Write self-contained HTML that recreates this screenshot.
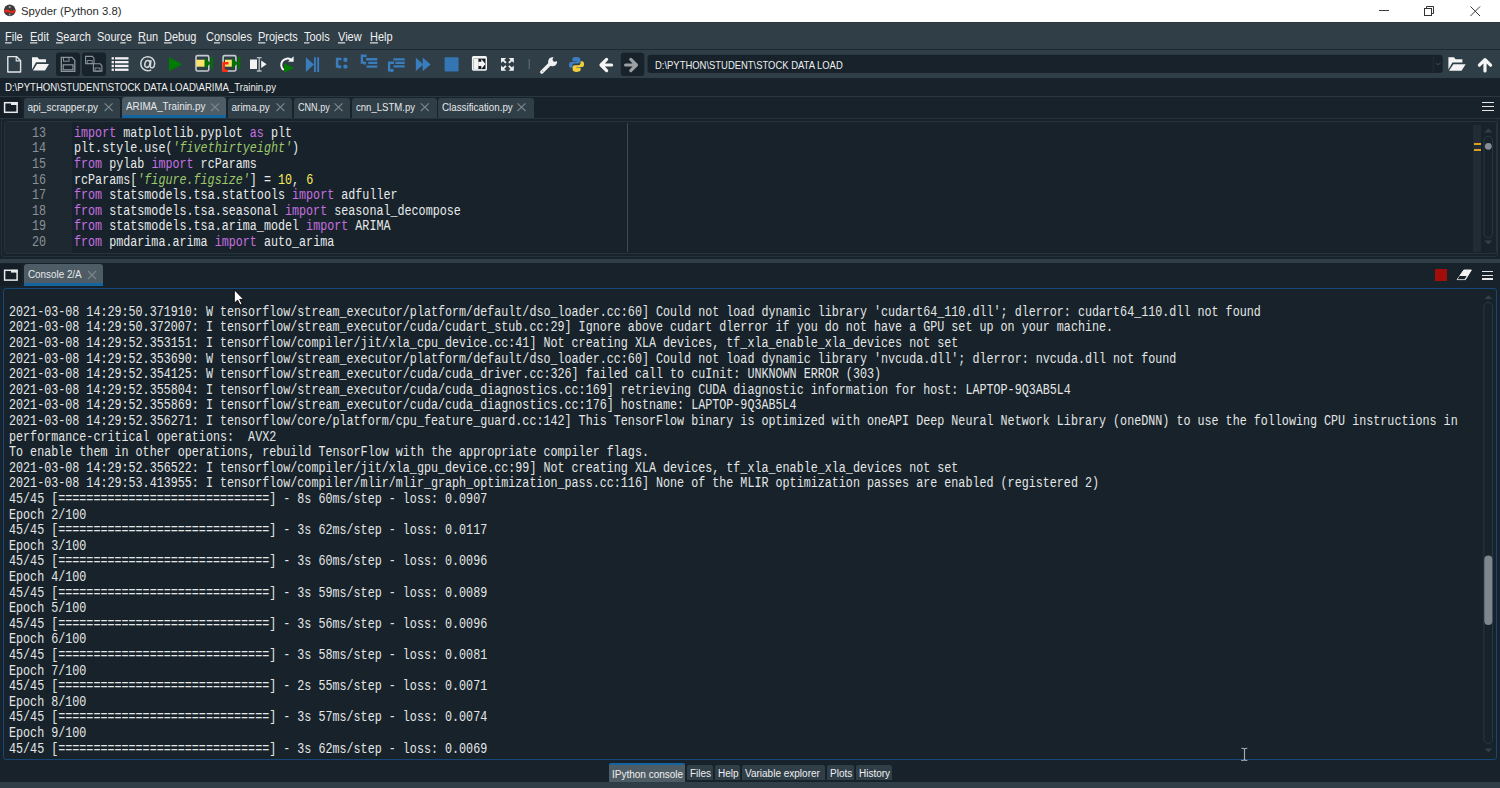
<!DOCTYPE html>
<html><head><meta charset="utf-8">
<style>
*{margin:0;padding:0;box-sizing:border-box}
html,body{width:1500px;height:788px;overflow:hidden;background:#17222a;font-family:"Liberation Sans",sans-serif;position:relative}
.a{position:absolute}
#title{left:0;top:0;width:1500px;height:22px;background:#fff}
#title .t{left:21px;top:4.5px;font-size:11.3px;color:#2a2a2a;white-space:nowrap}
#menu{left:0;top:22px;width:1500px;height:27px;background:#2f3e47;border-top:1px solid #2a363e}
#menu span{position:absolute;top:7px;transform:scaleY(1.12);transform-origin:0 0;font-size:11px;color:#f0f0f0;white-space:nowrap}
#menu u{text-decoration:underline}
#tool{left:0;top:49px;width:1500px;height:29px;background:#2f3e47;border-top:1px solid #1c2931}
#pathbar{left:0;top:78px;width:1500px;height:18px;background:#17222a}
#pathbar .t{left:5px;top:2.1px;font-size:9.6px;transform:scaleY(1.2);transform-origin:0 0;color:#f0f0f0;white-space:nowrap}
.tab{position:absolute;top:98px;height:20px;background:#2f3e47;border-radius:3px 3px 0 0}
.tab .t{position:absolute;left:3.5px;top:4px;font-size:10px;color:#e6e8ea;white-space:nowrap}
.tab .x{position:absolute;top:4px;width:10px;height:10px}
.tab.act{top:97px;height:21px;background:#4e5c65;border-bottom:3px solid #1464a0}
.mono{font-family:"Liberation Mono",monospace;font-size:11.72px;white-space:pre;line-height:13px;transform:scaleY(1.2);transform-origin:0 0}
#editor{left:1px;top:118px;width:1497px;height:139px;border:1px solid #26323b;border-radius:3px;background:#17222a}
#code{left:74px;top:126px;color:#e8eaeb}
#lnum{left:32px;top:126px;color:#8d9196}
.kw{color:#c670e0}.st{color:#9fc96b;font-style:italic}.nu{color:#faed5c}
#split{left:0;top:258.5px;width:1500px;height:4.5px;background:#2f3e47}
#console{left:3px;top:288px;width:1494px;height:472px;border:1.5px solid #17477a;border-radius:3px;background:#17222a}
#ctext{left:9px;top:305px;color:#e4e6e7}
#bottom{left:0;top:782px;width:1500px;height:6px;background:#2f3e47}
.btab{position:absolute;top:764px;height:18px;background:#2f3e47;border-radius:2px 2px 0 0;font-size:10px;color:#f0f0f0;white-space:nowrap;padding:3px 3px 0 3px;top:765px;height:15px}
</style></head><body>
<div id="title" class="a">
  <svg class="a" style="left:3px;top:4px" width="14" height="14" viewBox="0 0 14 14"><circle cx="6.7" cy="6.4" r="5.8" fill="#3d3d3d"/><path d="M1 6.6C3 5 5 5.6 7 6.4S10.8 6.6 12.6 5.2L12.4 8.2C10.6 9.4 8.6 9.4 6.8 8.8S3 8 1.2 9Z" fill="#e02a1e"/><circle cx="6.7" cy="3" r="1.1" fill="#aaa"/><circle cx="6.7" cy="10.5" r="1" fill="#999"/></svg>
  <div class="a t">Spyder (Python 3.8)</div>
  <svg class="a" style="left:1378px;top:5px" width="12" height="12"><line x1="1" y1="5.5" x2="11" y2="5.5" stroke="#3a3a3a" stroke-width="1"/></svg>
  <svg class="a" style="left:1423px;top:5px" width="12" height="12"><rect x="1.5" y="3.5" width="7" height="7" fill="none" stroke="#333"/><path d="M3.5 3.5V1.5H10.5V8.5H8.5" fill="none" stroke="#333"/></svg>
  <svg class="a" style="left:1469px;top:5px" width="12" height="12"><path d="M1.5 1.5L11 11M11 1.5L1.5 11" stroke="#3a3a3a" stroke-width="1"/></svg>
</div>
<div id="menu" class="a">
  <span style="left:5px"><u>F</u>ile</span>
  <span style="left:30px"><u>E</u>dit</span>
  <span style="left:56px"><u>S</u>earch</span>
  <span style="left:97px">Sour<u>c</u>e</span>
  <span style="left:138px"><u>R</u>un</span>
  <span style="left:164px"><u>D</u>ebug</span>
  <span style="left:206px">C<u>o</u>nsoles</span>
  <span style="left:258px"><u>P</u>rojects</span>
  <span style="left:304px"><u>T</u>ools</span>
  <span style="left:338px"><u>V</u>iew</span>
  <span style="left:370px"><u>H</u>elp</span>
</div>
<div id="tool" class="a">
<svg class="a" style="left:0;top:-1px" width="1500" height="29" viewBox="0 49 1500 29">
 <!-- new file -->
 <path d="M7.8 56.6H16.5L20.6 60.7V72H7.8Z" fill="none" stroke="#e4e6e8" stroke-width="1.4" stroke-linejoin="round"/>
 <path d="M16.2 56.8V60.9H20.4" fill="none" stroke="#e4e6e8" stroke-width="1.1"/>
 <!-- open folder -->
 <path d="M32 57.2H37.5L39 59.2H46V62.2H36L32 69.5Z" fill="#f4f4f4"/>
 <path d="M33 70.6L37 64H49L45 70.6Z" fill="#f4f4f4"/>
 <!-- save button bg -->
 <rect x="56" y="52.6" width="24" height="23.4" rx="3" fill="#17222a"/>
 <path d="M61.3 57.4H72L74.8 60.2V71.3H61.3Z" fill="none" stroke="#8d959c" stroke-width="1.3"/>
 <rect x="63.5" y="57.6" width="5.5" height="3.6" fill="none" stroke="#8d959c" stroke-width="1"/>
 <rect x="63.2" y="64.8" width="9.8" height="5" fill="none" stroke="#8d959c" stroke-width="1.2"/>
 <!-- save all -->
 <rect x="82" y="52.6" width="24" height="23.4" rx="3" fill="#17222a"/>
 <path d="M85.6 56.4H92.3L94 58.2V63.8H85.6Z" fill="none" stroke="#8d959c" stroke-width="1.1"/>
 <rect x="87.2" y="60.6" width="5" height="3" fill="none" stroke="#8d959c" stroke-width="0.9"/>
 <path d="M93.4 63.8H100.2L101.9 65.6V71.3H93.4Z" fill="none" stroke="#8d959c" stroke-width="1.1"/>
 <rect x="95" y="68" width="5" height="3" fill="none" stroke="#8d959c" stroke-width="0.9"/>
 <!-- list -->
 <g fill="#f2f2f2">
  <rect x="111.6" y="57.2" width="2.3" height="2.3"/><rect x="115" y="57.2" width="13.5" height="2.3"/>
  <rect x="111.6" y="61" width="2.3" height="2.3"/><rect x="115" y="61" width="13.5" height="2.3"/>
  <rect x="111.6" y="64.8" width="2.3" height="2.3"/><rect x="115" y="64.8" width="13.5" height="2.3"/>
  <rect x="111.6" y="68.6" width="2.3" height="2.3"/><rect x="115" y="68.6" width="13.5" height="2.3"/>
 </g>
 <!-- @ -->
 <g fill="none" stroke="#d3d8db" stroke-width="1.5" transform="translate(0,-1)"><path d="M151 61.2L150.3 67.2Q150.5 69.2 152.6 68.8Q154.7 67.6 154.7 64.4A7 7 0 1 0 151.2 70.8"/><ellipse cx="147.4" cy="64.9" rx="2.5" ry="3.5" transform="rotate(15 147.4 64.9)"/></g>
 <!-- run -->
 <path d="M169 57.3L182 64.3L169 71.3Z" fill="#007d00"/>
 <!-- run cell -->
 <rect x="196" y="55.6" width="12.8" height="15.4" rx="1.6" fill="none" stroke="#c6cbcf" stroke-width="1.6"/>
 <rect x="196.2" y="59.7" width="8.6" height="7" fill="#fbe46e"/>
 <path d="M204.6 57.7L210.8 63.2L204.6 68.7Z" fill="#007200"/>
 <rect x="210.8" y="56.8" width="2.3" height="12" fill="#007200"/>
 <!-- run cell advance -->
 <rect x="223.1" y="55.6" width="12.8" height="15.4" rx="1.6" fill="none" stroke="#c6cbcf" stroke-width="1.6"/>
 <rect x="225" y="59.7" width="7.2" height="7" fill="#fbe46e"/>
 <path d="M228.6 63.3H223.6V70.8H227.8" fill="none" stroke="#ff2a10" stroke-width="2.4"/>
 <path d="M231.8 57.7L238 63.2L231.8 68.7Z" fill="#007200"/>
 <rect x="238.1" y="56.8" width="2.3" height="12" fill="#007200"/>
 <!-- run selection -->
 <rect x="250" y="59.5" width="7" height="9.5" fill="#f4f4f4"/>
 <path d="M256.8 57.6H261.6M259.2 57.6V71M256.8 71H261.6" fill="none" stroke="#b4b9be" stroke-width="1.4"/>
 <path d="M261.2 60.6L266.6 64.3L261.2 68Z" fill="#f4f4f4"/>
 <!-- rerun -->
 <path d="M291.2 59.8A6.3 6.3 0 1 0 283.8 70" fill="none" stroke="#f4f4f4" stroke-width="2"/>
 <path d="M293.6 56.2V61.8H288Z" fill="#f4f4f4"/>
 <path d="M284 63.6L294.2 68L284 72.4Z" fill="#007d00"/>
 <!-- debug -->
 <g fill="#3a7dbd">
  <path d="M305.9 57.3L313.9 64.6L305.9 72Z"/>
  <rect x="314" y="57.3" width="1.9" height="14.7"/><rect x="317.2" y="57.3" width="1.9" height="14.7"/>
 </g>
 <!-- step -->
 <g fill="none" stroke="#3a7cbc" stroke-width="2.5">
  <path d="M341.4 58.9H337.1V66.4H339.4"/>
 </g>
 <g fill="#3a7cbc"><circle cx="345.4" cy="59.8" r="2.2"/><circle cx="345.4" cy="66.6" r="2.2"/><circle cx="339.6" cy="66.8" r="1.8"/></g>
 <!-- step into -->
 <g fill="none" stroke="#3a7cbc" stroke-width="2.4">
  <path d="M366.6 55.7H361.9V62.6H364"/>
  <path d="M366 59.3H377.3M368.2 62.9H377.3M366.5 66.6H377.3"/>
 </g>
 <circle cx="364.6" cy="63.1" r="1.7" fill="#3a7cbc"/>
 <!-- step return -->
 <g fill="none" stroke="#3a7cbc" stroke-width="2.4">
  <path d="M394 62.7H389.1V70.3H391.4"/>
  <path d="M393.4 59.4H404.7M395.3 62.9H404.7M393.4 66.4H404.7"/>
 </g>
 <circle cx="392" cy="70.6" r="1.8" fill="#3a7cbc"/>
 <!-- continue -->
 <g fill="#3a7dbd"><path d="M415.8 57.6L423.2 64.4L415.8 71.2Z"/><path d="M422.6 57.6L430.6 64.4L422.6 71.2Z"/></g>
 <!-- stop -->
 <rect x="444.6" y="57.2" width="14" height="14.4" rx="1" fill="#3575b4"/>
 <!-- maximize -->
 <rect x="471.9" y="55.9" width="15.1" height="14.8" rx="1.6" fill="#f4f4f4"/>
 <rect x="473.5" y="58.6" width="12" height="10.5" fill="#141c22"/>
 <rect x="473.5" y="58.6" width="4.9" height="10.5" fill="#f4f4f4"/>
 <path d="M478.2 61.8H481.3V58.9L485.5 63.9L481.3 68.9V66H478.2Z" fill="#f4f4f4"/>
 <!-- fullscreen -->
 <g fill="#eef0f2"><path d="M501 57.9H506.2L501 63.1Z"/><path d="M513.8 57.9H508.6L513.8 63.1Z"/><path d="M501 70.7H506.2L501 65.5Z"/><path d="M513.8 70.7H508.6L513.8 65.5Z"/></g>
 <g stroke="#eef0f2" stroke-width="1.9"><path d="M502.4 59.3L505.9 62.8M512.4 59.3L508.9 62.8M502.4 69.3L505.9 65.8M512.4 69.3L508.9 65.8"/></g>
 <!-- separator -->
 <rect x="528.6" y="59" width="1.2" height="10.2" fill="#5b6770"/>
 <!-- wrench -->
 <path d="M541.8 72L549.6 64.2" stroke="#f0f0f0" stroke-width="3.4" stroke-linecap="round"/>
 <circle cx="552.6" cy="61.8" r="4.5" fill="#f0f0f0"/>
 <circle cx="555" cy="59.4" r="2.4" fill="#2f3e47"/>
 <circle cx="542.6" cy="71.2" r="0.6" fill="#7a8288"/>
 <!-- python -->
 <path d="M576.4 57C572.5 57 572.4 58.4 572.4 59.6V61.4H576.6V62H570.8C569.2 62 569 63.5 569 65C569 66.8 569.6 67.7 571 67.7H572.4V65.8C572.4 64.6 573.2 63.6 574.5 63.6H578.4C579.5 63.6 580.4 62.8 580.4 61.6V59.4C580.4 58 579 57 576.4 57Z" fill="#3f7cc0"/>
 <path d="M576.6 71.9C580.5 71.9 580.6 70.5 580.6 69.3V67.5H576.4V66.9H582.2C583.8 66.9 584 65.4 584 63.9C584 62.1 583.4 61.2 582 61.2H580.6V63.1C580.6 64.3 579.8 65.3 578.5 65.3H574.6C573.5 65.3 572.6 66.1 572.6 67.3V69.5C572.6 70.9 574 71.9 576.6 71.9Z" fill="#f3cf3c"/>
 <!-- back arrow -->
 <path d="M611.6 65H602M606.6 59.4L601 65L606.6 70.6" fill="none" stroke="#f6f6f6" stroke-width="3.2" stroke-linejoin="round" stroke-linecap="round"/>
 <!-- forward bg -->
 <rect x="620.8" y="52.7" width="23.5" height="23.3" rx="3" fill="#17222a"/>
 <path d="M625.6 65H635.6M630.8 59.4L636.4 65L630.8 70.6" fill="none" stroke="#9ca1a5" stroke-width="3.2" stroke-linejoin="round" stroke-linecap="round"/>
 <!-- combobox -->
 <rect x="647.5" y="54.7" width="795.2" height="18.3" rx="3" fill="#17222a"/>
 <rect x="1432.8" y="55.5" width="1" height="17" fill="#232e38"/>
 <path d="M1436 63.4L1438.2 64.6L1440.4 63.4" fill="none" stroke="#4a5660" stroke-width="0.8"/>
 <!-- open folder right -->
 <path d="M1448.4 57.2H1454L1455.6 59.2H1462.4V62.4H1452.4L1448.4 69.4Z" fill="#f4f4f4"/>
 <path d="M1449 70.8L1453.4 64.2H1465.7L1461.5 70.8Z" fill="#f4f4f4"/>
 <!-- up arrow -->
 <path d="M1485 71V59.8M1479.4 65.2L1485 59.6L1490.6 65.2" fill="none" stroke="#f6f6f6" stroke-width="3.2" stroke-linejoin="round" stroke-linecap="round"/>
</svg>
<div class="a" style="left:655px;top:8.7px;font-size:9.45px;transform:scaleY(1.15);transform-origin:0 0;color:#eef0f2;white-space:nowrap">D:\PYTHON\STUDENT\STOCK DATA LOAD</div>
</div>
<div id="pathbar" class="a"><div class="a t">D:\PYTHON\STUDENT\STOCK DATA LOAD\ARIMA_Trainin.py</div></div>

<div id="tabs">
 <div class="a" style="left:0;top:96px;width:1500px;height:1px;background:#2a3741"></div>
 <div class="a" style="left:0;top:118px;width:1500px;height:1px;background:#2a3741"></div>
 <div class="a" style="left:0;top:97px;width:22px;height:21px;background:#151e26;border-radius:0 4px 4px 0"></div>
 <svg class="a" style="left:0;top:96px" width="24" height="24" viewBox="0 96 24 24"><rect x="4.6" y="102.7" width="12.5" height="9.6" fill="none" stroke="#e8eaec" stroke-width="1.5"/><rect x="11" y="102.2" width="6.6" height="2.8" fill="#e8eaec"/></svg>
 <div class="tab" style="left:24px;width:96px"><span class="t">api_scrapper.py</span></div>
 <div class="tab act" style="left:122px;width:104px"><span class="t" style="transform:scaleX(0.983);transform-origin:0 0">ARIMA_Trainin.py</span></div>
 <div class="tab" style="left:228px;width:64px"><span class="t">arima.py</span></div>
 <div class="tab" style="left:294px;width:56px"><span class="t" style="transform:scaleX(0.906);transform-origin:0 0">CNN.py</span></div>
 <div class="tab" style="left:352px;width:85px"><span class="t" style="transform:scaleX(0.958);transform-origin:0 0">cnn_LSTM.py</span></div>
 <div class="tab" style="left:438px;width:96px"><span class="t" style="transform:scaleX(0.979);transform-origin:0 0">Classification.py</span></div>
 <svg class="a" style="left:0;top:96px" width="1500" height="24" viewBox="0 96 1500 24">
  <g stroke="#7e868d" stroke-width="1.1" fill="none">
   <path d="M104.6 103.4L112.6 111M112.6 103.4L104.6 111"/>
   <path d="M211 103.4L219 111M219 103.4L211 111"/>
   <path d="M276.4 103.4L284.4 111M284.4 103.4L276.4 111"/>
   <path d="M334.5 103.4L342.5 111M342.5 103.4L334.5 111"/>
   <path d="M420.8 103.4L428.8 111M428.8 103.4L420.8 111"/>
   <path d="M517.5 103.4L525.5 111M525.5 103.4L517.5 111"/>
  </g>
 </svg>
 
 <div class="a" style="left:1482px;top:101.7px;width:12px;height:1.7px;background:#e4e6e8"></div>
 <div class="a" style="left:1482px;top:105.7px;width:12px;height:1.7px;background:#e4e6e8"></div>
 <div class="a" style="left:1482px;top:109.8px;width:12px;height:1.7px;background:#e4e6e8"></div>
</div>

<div id="editor" class="a"></div>
<div class="a" style="left:4px;top:121px;width:1493px;height:133px;border:1px solid #27333c;border-radius:3px"></div>
<div class="a" style="left:5px;top:122px;width:67px;height:131px;background:#1d2830"></div>
<div class="a" style="left:1472.8px;top:124.5px;width:8.6px;height:127px;background:#212c36"></div>
<div class="a" style="left:1473.8px;top:143.4px;width:7.2px;height:2px;background:#dca020"></div>
<div class="a" style="left:1473.8px;top:149.4px;width:7.2px;height:2px;background:#dca020"></div>
<svg class="a" style="left:1480px;top:124px" width="16" height="130" viewBox="1480 124 16 130">
 <path d="M1484.2 132.6L1488.3 128.5L1492.4 132.6Z" fill="#34414b"/>
 <rect x="1484" y="136.3" width="8.6" height="101.6" rx="4.3" fill="none" stroke="#2b3741" stroke-width="1"/>
 <circle cx="1488.3" cy="146.3" r="3.4" fill="#868d94"/>
 <path d="M1484.2 240.4L1488.3 244.5L1492.4 240.4Z" fill="#34414b"/>
</svg>
<div class="a" style="left:627px;top:123px;width:1px;height:129px;background:#3d4a53"></div>
<div id="lnum" class="a mono">13
14
15
16
17
18
19
20</div>
<div id="code" class="a mono"><span class="kw">import</span> matplotlib.pyplot <span class="kw">as</span> plt
plt.style.use(<span class="st">'fivethirtyeight'</span>)
<span class="kw">from</span> pylab <span class="kw">import</span> rcParams
rcParams[<span class="st">'figure.figsize'</span>] = <span class="nu">10</span>, <span class="nu">6</span>
<span class="kw">from</span> statsmodels.tsa.stattools <span class="kw">import</span> adfuller
<span class="kw">from</span> statsmodels.tsa.seasonal <span class="kw">import</span> seasonal_decompose
<span class="kw">from</span> statsmodels.tsa.arima_model <span class="kw">import</span> ARIMA
<span class="kw">from</span> pmdarima.arima <span class="kw">import</span> auto_arima</div>

<div id="split" class="a"></div>
<div id="console" class="a"></div>
<div class="a" style="left:0;top:264px;width:22px;height:22px;background:#151e26;border-radius:0 4px 4px 0"></div>
<svg class="a" style="left:0;top:264px" width="24" height="24" viewBox="0 264 24 24"><rect x="4.6" y="270.3" width="12.5" height="9.8" fill="none" stroke="#e8eaec" stroke-width="1.5"/><rect x="11" y="269.8" width="6.6" height="2.8" fill="#e8eaec"/></svg>
<div class="tab act" style="left:24px;top:264.3px;width:79px;height:21.5px"><span class="t" style="top:5px;transform:scaleX(0.985);transform-origin:0 0">Console 2/A</span></div>
<svg class="a" style="left:86px;top:269px" width="12" height="12"><path d="M2 2L10 10M10 2L2 10" stroke="#7e868d" stroke-width="1.1"/></svg>
<div class="a" style="left:1435.2px;top:269.2px;width:12px;height:11.4px;background:#a30e0a"></div>
<svg class="a" style="left:1454px;top:267px" width="20" height="16" viewBox="1454 267 20 16">
 <path d="M1463.8 270H1471.4L1465.4 279.6H1457.2Z" fill="#f2f2f2" stroke="#f2f2f2" stroke-width="1" stroke-linejoin="round"/>
 <path d="M1459.6 276H1466.6L1464.6 279.2H1457.6Z" fill="#17222a"/>
</svg>
<div class="a" style="left:1482px;top:270.7px;width:11px;height:1.7px;background:#e4e6e8"></div>
<div class="a" style="left:1482px;top:274.6px;width:11px;height:1.7px;background:#e4e6e8"></div>
<div class="a" style="left:1482px;top:278.4px;width:11px;height:1.7px;background:#e4e6e8"></div>
<svg class="a" style="left:1480px;top:290px" width="16" height="470" viewBox="1480 290 16 470">
 <path d="M1484.6 299.1L1488.4 295.3L1492.2 299.1Z" fill="#34414b"/>
 <rect x="1483.9" y="302.5" width="8.6" height="441" rx="4.3" fill="none" stroke="#2b3741" stroke-width="1"/>
 <rect x="1484.3" y="555.5" width="8" height="69.5" rx="4" fill="#7f878e"/>
 <path d="M1484.6 748.5L1488.4 752.3L1492.2 748.5Z" fill="#34414b"/>
</svg>
<div id="ctext" class="a mono">2021-03-08 14:29:50.371910: W tensorflow/stream_executor/platform/default/dso_loader.cc:60] Could not load dynamic library 'cudart64_110.dll'; dlerror: cudart64_110.dll not found
2021-03-08 14:29:50.372007: I tensorflow/stream_executor/cuda/cudart_stub.cc:29] Ignore above cudart dlerror if you do not have a GPU set up on your machine.
2021-03-08 14:29:52.353151: I tensorflow/compiler/jit/xla_cpu_device.cc:41] Not creating XLA devices, tf_xla_enable_xla_devices not set
2021-03-08 14:29:52.353690: W tensorflow/stream_executor/platform/default/dso_loader.cc:60] Could not load dynamic library 'nvcuda.dll'; dlerror: nvcuda.dll not found
2021-03-08 14:29:52.354125: W tensorflow/stream_executor/cuda/cuda_driver.cc:326] failed call to cuInit: UNKNOWN ERROR (303)
2021-03-08 14:29:52.355804: I tensorflow/stream_executor/cuda/cuda_diagnostics.cc:169] retrieving CUDA diagnostic information for host: LAPTOP-9Q3AB5L4
2021-03-08 14:29:52.355869: I tensorflow/stream_executor/cuda/cuda_diagnostics.cc:176] hostname: LAPTOP-9Q3AB5L4
2021-03-08 14:29:52.356271: I tensorflow/core/platform/cpu_feature_guard.cc:142] This TensorFlow binary is optimized with oneAPI Deep Neural Network Library (oneDNN) to use the following CPU instructions in
performance-critical operations:  AVX2
To enable them in other operations, rebuild TensorFlow with the appropriate compiler flags.
2021-03-08 14:29:52.356522: I tensorflow/compiler/jit/xla_gpu_device.cc:99] Not creating XLA devices, tf_xla_enable_xla_devices not set
2021-03-08 14:29:53.413955: I tensorflow/compiler/mlir/mlir_graph_optimization_pass.cc:116] None of the MLIR optimization passes are enabled (registered 2)
45/45 [==============================] - 8s 60ms/step - loss: 0.0907
Epoch 2/100
45/45 [==============================] - 3s 62ms/step - loss: 0.0117
Epoch 3/100
45/45 [==============================] - 3s 60ms/step - loss: 0.0096
Epoch 4/100
45/45 [==============================] - 3s 59ms/step - loss: 0.0089
Epoch 5/100
45/45 [==============================] - 3s 56ms/step - loss: 0.0096
Epoch 6/100
45/45 [==============================] - 3s 58ms/step - loss: 0.0081
Epoch 7/100
45/45 [==============================] - 2s 55ms/step - loss: 0.0071
Epoch 8/100
45/45 [==============================] - 3s 57ms/step - loss: 0.0074
Epoch 9/100
45/45 [==============================] - 3s 62ms/step - loss: 0.0069</div>

<div class="a" style="left:0;top:782px;width:1500px;height:6px;background:#2f3e47"></div>
<div class="btab" style="left:609px;top:763px;width:76px;height:19px;background:#4e5c65;border-top:2px solid #1464a0;padding-top:3.5px">IPython console</div>
<div class="btab" style="left:687px;width:26px">Files</div>
<div class="btab" style="left:715px;width:25px">Help</div>
<div class="btab" style="left:742px;width:83px">Variable explorer</div>
<div class="btab" style="left:827px;width:27px">Plots</div>
<div class="btab" style="left:856px;width:36px">History</div>
<svg class="a" style="left:0;top:0" width="1500" height="788" viewBox="0 0 1500 788">
 <path d="M234.3 289.8V303.2L237.6 300.2L240.1 305L242.1 304.1L239.7 299.4L243.6 299.3Z" fill="#fff" stroke="#000" stroke-width="0.9" stroke-linejoin="round"/>
 <path d="M1241.3 748.3Q1243.4 748 1244.5 749.2Q1245.6 748 1247.3 748.3M1244.5 749.2V759.6M1241.3 760.4Q1243.4 760.7 1244.5 759.6Q1245.6 760.7 1247.3 760.4" fill="none" stroke="#a9aeb2" stroke-width="1.1"/>
</svg>
</body></html>
